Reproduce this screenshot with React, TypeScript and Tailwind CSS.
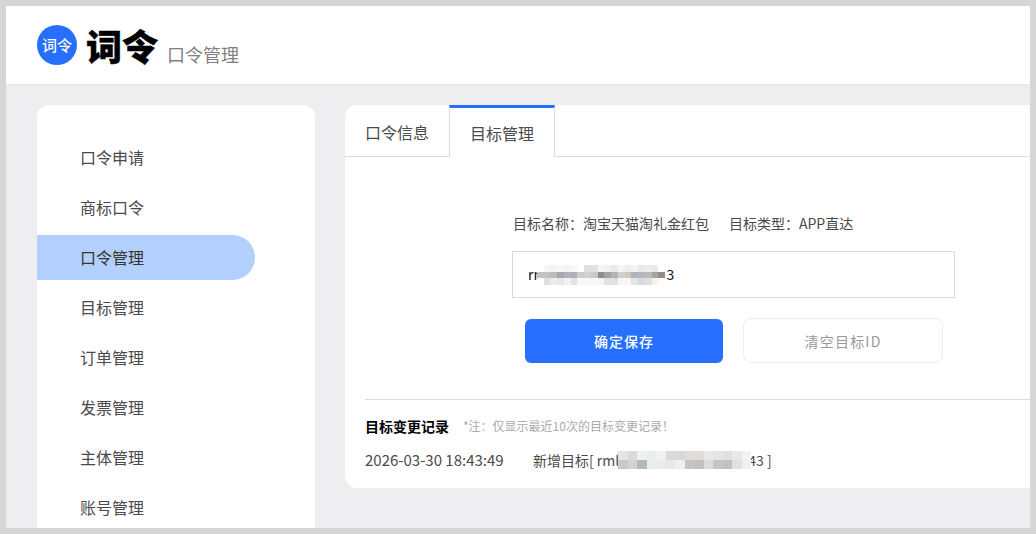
const navItems = ['口令申请', '商标口令', '口令管理', '目标管理', '订单管理', '发票管理', '主体管理', '账号管理'];

const inputMosaic = [
  ['#ffffff', '#f7f7f7', '#f6f4f2', '#f7f7f7', '#f4f4f4', '#f8f8f8', '#ffffff', '#dfdfdf', '#e2e2e2', '#f6f6f6', '#f2f0f0', '#eaeaea', '#f4f4f6', '#eeeeee', '#f2f2f2', '#e8e8e8', '#ececec', '#e8e8e8', '#ffffff'],
  ['#c4c2c4', '#c6c2c4', '#bdb9bd', '#a9a7ad', '#b3b0b8', '#aeb0b8', '#cccccc', '#d2d2d2', '#c8c8c8', '#8f8c8c', '#aaa29e', '#b8b2ae', '#d0d0d6', '#cfc8ba', '#aeb2ba', '#b4b8be', '#bfb8b2', '#a8a4a0', '#8e8e8e'],
  ['#ffffff', '#e0e0e0', '#ececec', '#e8e8e8', '#f2f2f2', '#e2e2e2', '#f8f8f8', '#f8f8f8', '#f8f8f8', '#f4f4f4', '#e2e2e2', '#e0e0e0', '#f6f6f6', '#fbf6f0', '#e4e4e4', '#d9d9d9', '#e0e0e0', '#f2f2f2', '#fffaf4'],
];

const logMosaic = [
  ['#e4e4e8', '#d9d9de', '#eef0f2', '#eceeee', '#f2f2f2', '#d9d9d9', '#d9d9d9', '#e0dcd8', '#e0dcd8', '#e8e8e8', '#e4e4e4', '#e0e0e0', '#e8e8ea', '#f2f2f4'],
  ['#c8c8cc', '#d8d2cc', '#b0b8c0', '#eceeee', '#e8ebf0', '#e6e8ee', '#f0f0f0', '#c8c4c0', '#c4c0bc', '#dcdcdc', '#c8c4c4', '#c4c0c0', '#e0e0e0', '#eef0f2'],
];

function Mosaic({ rows, cell, w, h }: { rows: string[][]; cell: number; w: number; h: number }) {
  return (
    <svg width={w} height={h} className="absolute left-0 top-0" shapeRendering="crispEdges">
      {rows.map((row, y) =>
        row.map((fill, x) => <rect key={`${x}-${y}`} x={x * cell} y={y * (h / rows.length)} width={cell} height={h / rows.length} fill={fill} />)
      )}
    </svg>
  );
}

export default function App() {
  return (
    <div className="flex h-[534px] w-[1036px] flex-col overflow-hidden border-[6px] border-[#d6d6d6] bg-[#eeeef0] font-['Noto_Sans_CJK_SC','Liberation_Sans',sans-serif] text-[#4a4a4a]">
      <header className="flex h-[78px] shrink-0 items-center bg-white pl-[31px] shadow-[0_1px_2px_rgba(0,0,0,0.03)]">
        <div className="relative flex h-10 w-10 items-center justify-center rounded-full bg-[#266fff] pb-[1px] text-[15px] font-medium leading-none text-white">
          词令
          <span className="absolute left-[6px] top-[13px] h-[2px] w-[2px] rounded-full bg-[#f5a623]" />
          <span className="absolute left-[28px] top-[22px] h-[2px] w-[2px] rounded-full bg-[#f5a623]" />
        </div>
        <div className="ml-[9px] text-[36px] font-black leading-none text-black [-webkit-text-stroke:0.5px_black]">词令</div>
        <div className="ml-[9px] mt-[18px] text-[18px] leading-none text-[#808080]">口令管理</div>
      </header>

      <div className="flex min-h-0 flex-1 gap-[30px] pl-[31px] pt-[21px]">
        <aside className="h-[500px] w-[278px] shrink-0 rounded-xl bg-white pt-[30px]">
          {navItems.map((item) => (
            <div
              key={item}
              className={`mb-[5px] flex h-[45px] w-[218px] items-center rounded-r-full pb-[2px] pl-[43px] text-[16px] leading-none ${item === '口令管理' ? 'bg-[#b3cffd] text-[#333333]' : ''}`}
            >
              {item}
            </div>
          ))}
        </aside>

        <main className="h-[383px] min-w-0 flex-1 rounded-l-xl bg-white">
          <div className="flex h-[52px] border-b border-[#dddddd]">
            <div className="flex w-[104px] items-center justify-center pt-[3px] text-[16px] leading-none">口令信息</div>
            <div className="-mb-px flex h-[52px] w-[106px] items-center justify-center border-x border-t-[3px] border-x-[#dddddd] border-t-[#266fff] bg-white text-[16px] leading-none">目标管理</div>
          </div>

          <div className="ml-[168px] mt-[59px] flex gap-[20px] text-[14px] leading-none">
            <span>目标名称：淘宝天猫淘礼金红包</span>
            <span>目标类型：APP直达</span>
          </div>

          <div className="relative ml-[167px] mt-[21px] flex h-[47px] w-[443px] items-center border border-[#dadada] pl-[15px] text-[14px] text-[#111111]">
            <span>rm</span>
            <span className="ml-[120px]">3</span>
            <div className="absolute left-[24px] top-[13px] h-[20px] w-[128px]">
              <Mosaic rows={inputMosaic} cell={6.74} w={128} h={20} />
            </div>
          </div>

          <div className="ml-[180px] mt-[20px] flex items-end gap-5">
            <button className="h-[44px] w-[198px] rounded-md bg-[#266fff] text-[14px] font-medium tracking-[1px] text-white">确定保存</button>
            <button className="h-[45px] w-[200px] rounded-lg border border-[#eeeeee] bg-white pt-[1px] text-[14px] tracking-[1.2px] text-[#999999]">清空目标ID</button>
          </div>

          <div className="ml-5 mt-[36px] border-t border-[#dddddd] pt-[19px]">
            <div className="flex items-center leading-none">
              <span className="text-[14px] font-bold text-black">目标变更记录</span>
              <span className="ml-[14px] text-[12px] text-[#aaaaaa]">*注：仅显示最近10次的目标变更记录！</span>
            </div>
            <div className="mt-[19px] flex items-center text-[14px] leading-none">
              <span className="w-[168px] text-[15px]">2026-03-30 18:43:49</span>
              <span className="relative">
                新增目标[ rml
                <span className="ml-[129px]">43 ]</span>
                <span className="absolute left-[85px] top-[-2px] h-[18px] w-[133px]">
                  <Mosaic rows={logMosaic} cell={9.5} w={133} h={18} />
                </span>
              </span>
            </div>
          </div>
        </main>
      </div>
    </div>
  );
}
